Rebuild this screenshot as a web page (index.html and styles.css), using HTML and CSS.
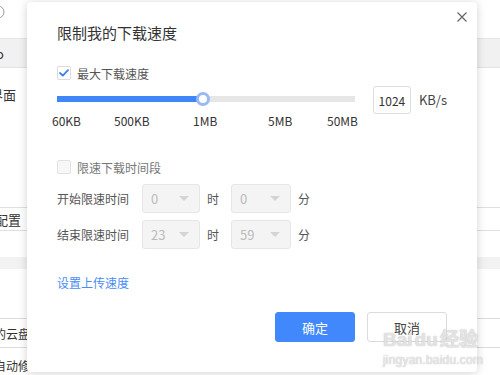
FILE: index.html
```html
<!DOCTYPE html>
<html lang="zh-CN">
<head>
<meta charset="utf-8">
<title>限制我的下载速度</title>
<link rel="stylesheet" href="styles.css">
</head>
<body>
<div class="page">
  <div class="bg-head">
    <svg class="bg-circle" width="14" height="14" viewBox="0 0 14 14"><circle cx="7" cy="7" r="6" fill="none" stroke="#999" stroke-width="1"/></svg>
  </div>
  <div class="bg-row bg-grey"><div class="clip e3"><span>Info</span></div></div>
  <div class="bg-row bg-plain"><div class="clip e16"><span>显示主界面</span></div></div>
  <div class="bg-gap1"></div>
  <div class="bg-row bg-btn"><div class="clip e20"><span>恢复默认配置</span></div></div>
  <div class="bg-band"></div>
  <div class="bg-gap2"></div>
  <div class="bg-row bg-line"><div class="clip e30"><span>我的云盘</span></div></div>
  <div class="bg-row bg-last"><div class="clip e42"><span>自动修复</span></div></div>

  <div class="dialog">
    <svg class="close" width="12" height="12" viewBox="0 0 12 12"><path d="M1.5 1.5 L10.5 10.5 M10.5 1.5 L1.5 10.5" stroke="#666" stroke-width="1.2" fill="none"/></svg>
    <div class="title">限制我的下载速度</div>

    <div class="check-row first">
      <span class="box checked">
        <svg width="10" height="8" viewBox="0 0 10 8"><path d="M1 4 L3.8 6.6 L9 1.2" stroke="#3b7ff5" stroke-width="1.8" fill="none" stroke-linecap="round" stroke-linejoin="round"/></svg>
      </span>
      <span class="check-label">最大下载速度</span>
    </div>

    <div class="slider-row">
      <div class="slider-col">
        <div class="track">
          <div class="fill"></div>
          <div class="thumb"></div>
        </div>
        <div class="scale">
          <span>60KB</span><span>500KB</span><span>1MB</span><span>5MB</span><span>50MB</span>
        </div>
      </div>
      <div class="num-input">1024</div>
      <span class="unit">KB/s</span>
    </div>

    <div class="check-row second">
      <span class="box"></span>
      <span class="check-label">限速下载时间段</span>
    </div>

    <div class="time-row t1">
      <span class="time-label">开始限速时间</span>
      <div class="select"><span>0</span><i class="arrow"></i></div>
      <span class="unit-cn">时</span>
      <div class="select s2"><span>0</span><i class="arrow"></i></div>
      <span class="unit-cn">分</span>
    </div>
    <div class="time-row t2">
      <span class="time-label">结束限速时间</span>
      <div class="select"><span>23</span><i class="arrow"></i></div>
      <span class="unit-cn">时</span>
      <div class="select s2"><span>59</span><i class="arrow"></i></div>
      <span class="unit-cn">分</span>
    </div>

    <div class="link">设置上传速度</div>

    <div class="buttons">
      <div class="btn primary">确定</div>
      <div class="btn">取消</div>
    </div>
  </div>

  <div class="watermark">
    <div class="wm1">Bai<span class="du">du</span>经验</div>
    <div class="wm2">jingyan.baidu.com</div>
  </div>
</div>
</body>
</html>
```

FILE: styles.css
```css
* { box-sizing: border-box; }
html, body { margin: 0; padding: 0; }
body {
  width: 500px;
  height: 375px;
  overflow: hidden;
  background: #fff;
  font-family: "Noto Sans CJK SC", "Noto Sans", sans-serif;
  color: #333;
}
.page {
  position: relative;
  width: 500px;
  height: 375px;
  overflow: hidden;
}

/* background page */
.bg-head { height: 38px; position: relative; }
.bg-circle { display: block; margin-left: -9px; position: relative; top: 5px; }
.bg-row {
  display: flex;
  align-items: center;
  font-size: 13px;
  color: #333;
}
.clip {
  display: flex;
  justify-content: flex-end;
  white-space: nowrap;
}
.e3 { width: 4px; }
.e16 { width: 16px; }
.e20 { width: 21px; }
.e30 { width: 30px; }
.e42 { width: 42px; }
.bg-grey {
  height: 30px;
  background: #f1f1f1;
  border-top: 1px solid #e6e6e6;
  border-bottom: 1px solid #e2e2e2;
}
.bg-plain { height: 52px; }
.bg-gap1 { height: 87px; }
.bg-btn {
  height: 24px;
  border-top: 1px solid #e0e0e0;
  border-bottom: 1px solid #e0e0e0;
}
.bg-band {
  margin-top: 26px;
  height: 12px;
  background: #f2f2f2;
}
.bg-gap2 { height: 49px; }
.bg-line {
  height: 30px;
  font-size: 12px;
  border-top: 1px solid #dcdcdc;
  border-bottom: 1px solid #dcdcdc;
}
.bg-last { height: 34px; font-size: 12px; }

/* dialog */
.dialog {
  position: absolute;
  left: 27px;
  top: 2px;
  width: 450px;
  height: 370px;
  background: #fff;
  border-radius: 4px;
  box-shadow: 0 1px 10px rgba(0, 0, 0, 0.18);
  padding: 21px 30px 0 30px;
}
.close {
  position: absolute;
  right: 9px;
  top: 9px;
}
.title {
  font-size: 15px;
  line-height: 20px;
  color: #333;
}
.check-row {
  display: flex;
  align-items: center;
  height: 16px;
}
.check-row.first { margin-top: 22px; }
.check-row.second { margin-top: 30px; }
.box {
  width: 14px;
  height: 14px;
  border: 1px solid #dcdcdc;
  border-radius: 2px;
  background: #fff;
  display: flex;
  align-items: center;
  justify-content: center;
}
.check-row.second .box {
  background: #f7f7f7;
  border-color: #e2e2e2;
}
.check-label {
  margin-left: 6px;
  font-size: 12px;
  color: #555;
}
.check-row.second .check-label { color: #777; }

.slider-row {
  margin-top: 5px;
  display: flex;
  align-items: flex-start;
}
.slider-col {
  width: 298px;
  padding-top: 10px;
}
.track {
  position: relative;
  height: 6px;
  background: #e6e6e6;
}
.fill {
  width: 146px;
  height: 6px;
  background: #3f86f9;
}
.thumb {
  position: absolute;
  left: 139px;
  top: -4px;
  width: 14px;
  height: 14px;
  border-radius: 50%;
  background: #fff;
  border: 3px solid #98b9f7;
}
.scale {
  margin-top: 11px;
  margin-left: -5px;
  display: grid;
  grid-template-columns: 62px 79px 75px 59px auto;
  font-size: 12px;
  line-height: 16px;
  color: #333;
}
.num-input {
  margin-left: 18px;
  width: 41px;
  height: 28px;
  border: 1px solid #dedede;
  border-radius: 3px;
  display: flex;
  align-items: center;
  justify-content: center;
  font-size: 12px;
  color: #333;
}
.unit {
  margin-left: 8px;
  line-height: 28px;
  font-size: 13px;
  color: #444;
}

.time-row {
  display: flex;
  align-items: center;
  height: 29px;
  font-size: 12px;
  color: #555;
}
.time-row.t1 { margin-top: 9px; }
.time-row.t2 { margin-top: 7px; }
.time-label { width: 85px; }
.select {
  width: 58px;
  height: 29px;
  background: #f4f4f4;
  border: 1px solid #e6e6e6;
  border-radius: 3px;
  display: flex;
  align-items: center;
  justify-content: space-between;
  padding: 0 10px 0 8px;
  color: #bbb;
  font-size: 13px;
}
.select.s2 { width: 60px; }
.arrow {
  width: 0;
  height: 0;
  border-left: 5px solid transparent;
  border-right: 5px solid transparent;
  border-top: 5px solid #d4d4d4;
}
.unit-cn {
  margin: 0 12px 0 7px;
  color: #555;
}
.link {
  margin-top: 26px;
  font-size: 12px;
  line-height: 16px;
  color: #4a8cf5;
}
.buttons {
  margin-top: 21px;
  display: flex;
  justify-content: flex-end;
  gap: 12px;
}
.btn {
  width: 80px;
  height: 30px;
  border-radius: 3px;
  border: 1px solid #dcdcdc;
  background: #fff;
  display: flex;
  align-items: center;
  justify-content: center;
  font-size: 13px;
  color: #444;
}
.btn.primary {
  background: #4088fc;
  border-color: #4088fc;
  color: #fff;
}
.watermark {
  position: absolute;
  left: 383px;
  top: 330px;
  color: rgba(255, 255, 255, 0.6);
  text-shadow: 0 0 1px rgba(160, 160, 160, 0.5), 0 0 1px rgba(160, 160, 160, 0.5);
  font-family: "Liberation Sans", sans-serif;
  line-height: 1;
  pointer-events: none;
}
.wm1 { font-size: 19px; font-weight: bold; }
.wm1 .du { margin: 0 2px; }
.wm2 { font-size: 12px; margin-top: 5px; letter-spacing: 0.2px; }
```
